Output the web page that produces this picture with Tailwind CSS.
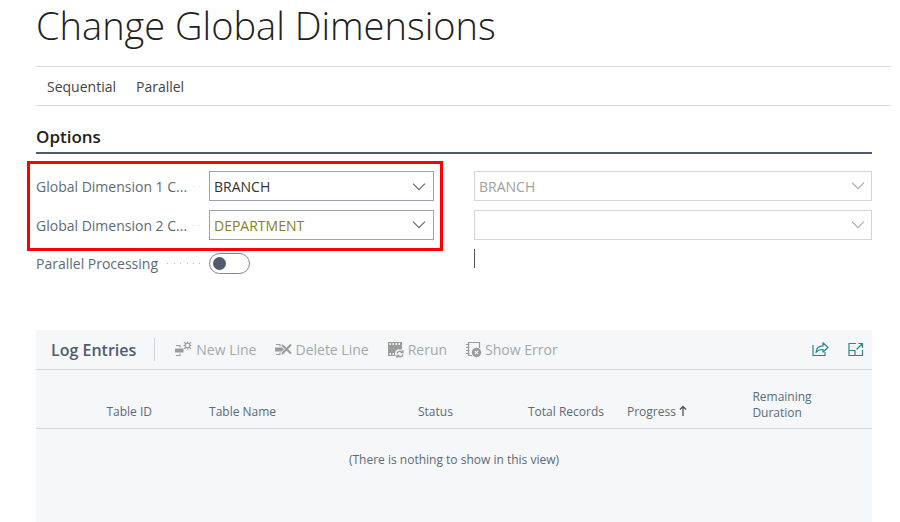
<!DOCTYPE html>
<html lang="en">
<head>
<meta charset="utf-8">
<meta name="viewport" content="width=device-width, initial-scale=1">
<title>Change Global Dimensions</title>
<script src="https://cdn.jsdelivr.net/npm/@tailwindcss/browser@4"></script>
</head>
<body class="bg-white font-['Open_Sans',sans-serif] text-sm text-[#5c6b75]">
<div class="flex min-h-screen flex-col pl-9">
  <h1 class="pb-[15px] text-[38px] leading-[51px] font-light whitespace-nowrap text-[#212121]">Change Global Dimensions</h1>

  <nav class="mr-[9px] flex h-10 items-center gap-5 border-y border-[#dcdcdc] px-[11px] pt-0.5 text-[#444]" aria-label="Actions">
    <button type="button">Sequential</button>
    <button type="button">Parallel</button>
  </nav>

  <main class="mr-7 flex grow flex-col">
    <section aria-labelledby="options">
      <h2 id="options" class="flex h-12 items-end border-b-2 border-[#505c6d] pb-[3px] text-[17px] leading-6 font-semibold text-[#212121]">Options</h2>
      <form class="relative mt-[17px] grid grid-cols-2 gap-x-10 gap-y-[9px]">
        <div class="flex h-[30px] items-center">
          <label for="dim1" class="flex w-[173px] shrink-0 items-center justify-between pt-0.5 pr-2">Global Dimension 1 C...
            <svg class="h-1 w-2" viewBox="0 0 8 4" fill="#d5d9dc"><path d="M0 1h1v1H0zM6 1h1v1H6z"/></svg></label>
          <div class="relative grow">
            <select id="dim1" class="h-[30px] w-full appearance-none border border-[#9ba3b0] bg-white px-1 pt-0.5 text-[#333]"><option>BRANCH</option><option>DEPARTMENT</option></select>
            <svg class="pointer-events-none absolute top-3 right-2 h-2 w-[14px]" viewBox="0 0 14 8" fill="none" stroke="#666" stroke-width="1.1"><path d="M1 .7 7 6.7 13 .7"/></svg>
          </div>
        </div>
        <div class="relative">
          <select disabled aria-label="Current global dimension 1 code" class="h-[30px] w-full appearance-none border border-[#d2d4d8] bg-white px-1 pt-0.5 text-[#a0a0a0] opacity-100"><option>BRANCH</option></select>
          <svg class="pointer-events-none absolute top-[11px] right-[7px] h-2 w-[14px]" viewBox="0 0 14 8" fill="none" stroke="#aaa" stroke-width="1.1"><path d="M1 .7 7 6.7 13 .7"/></svg>
        </div>

        <div class="flex h-[30px] items-center">
          <label for="dim2" class="flex w-[173px] shrink-0 items-center justify-between pt-0.5 pr-2">Global Dimension 2 C...
            <svg class="h-1 w-2" viewBox="0 0 8 4" fill="#d5d9dc"><path d="M0 1h1v1H0zM6 1h1v1H6z"/></svg></label>
          <div class="relative grow">
            <select id="dim2" class="h-[30px] w-full appearance-none border border-[#9ba3b0] bg-white px-1 pt-0.5 text-[#8a8017]"><option>DEPARTMENT</option><option>BRANCH</option></select>
            <svg class="pointer-events-none absolute top-[11px] right-2 h-2 w-[14px]" viewBox="0 0 14 8" fill="none" stroke="#666" stroke-width="1.1"><path d="M1 .7 7 6.7 13 .7"/></svg>
          </div>
        </div>
        <div class="relative">
          <select disabled aria-label="Current global dimension 2 code" class="h-[30px] w-full appearance-none border border-[#d2d4d8] bg-white px-1 pt-0.5 text-[#a0a0a0] opacity-100"><option></option></select>
          <svg class="pointer-events-none absolute top-[11px] right-[7px] h-2 w-[14px]" viewBox="0 0 14 8" fill="none" stroke="#aaa" stroke-width="1.1"><path d="M1 .7 7 6.7 13 .7"/></svg>
        </div>

        <div class="flex h-7 items-center">
          <label for="parallel" class="flex w-[173px] shrink-0 items-center justify-between pt-0.5 pr-2">Parallel Processing
            <svg class="h-1 w-[34px]" viewBox="0 0 34 4" fill="#b5babf"><path d="M0 1h1v1H0zM7 1h1v1H7zM13 1h1v1h-1zM20 1h1v1h-1zM26 1h1v1h-1zM32 1h1v1h-1z"/></svg></label>
          <span class="relative flex">
            <input id="parallel" type="checkbox" role="switch" class="peer h-[21px] w-[41px] appearance-none rounded-full border border-[#7d8694] bg-white">
            <span class="pointer-events-none absolute top-1 left-1 size-[13px] rounded-full bg-[#505c6d] peer-checked:left-6"></span>
          </span>
        </div>
        <input type="text" readonly aria-label="Current value" class="h-[19px] w-full border-l border-[#555] px-1 outline-none">

        <div class="pointer-events-none absolute -top-[10px] -left-[9px] h-[90px] w-[calc(50%-2px)] border-3 border-[#ff0000]"></div>
      </form>
    </section>

    <section class="mt-[53px] grow bg-[#f5f7f9]" aria-labelledby="log">
      <div class="flex h-10 items-center border-b border-[#d5d8db] pr-2 pl-[15px] text-[#a3a9ad]">
        <h2 id="log" class="text-base font-semibold text-[#505c6d]">Log Entries</h2>
        <span class="mr-5 ml-[18px] h-[23px] w-px bg-[#d0d4d8]"></span>
        <div class="flex items-center gap-[19px]">
          <button type="button" class="flex items-center gap-[3px]">
            <svg class="h-[18px] w-[18px]" viewBox="0 0 18 18" fill="none" stroke="#9a9c9b"><path d="M1 4.500h4v2M1 14.500h4v-2" stroke-width="1.200"/><path d="M0 7.500h8.500v4H0z" fill="#9a9c9b" stroke="none"/><circle cx="12.500" cy="4.500" r="2.300" stroke-width="1.100"/><path d="M8.500 4.500h1.500M15 4.500h1.500M12.500.500V2M12.500 7v1.500M9 1l1.800 1.800M14.200 6.200 16 8M16 1l-1.800 1.800M10.800 6.200 9 8" stroke-width="1.100"/></svg>New Line</button>
          <button type="button" class="flex items-center gap-[3px]">
            <svg class="h-[18px] w-[17px]" viewBox="0 0 17 18" fill="none" stroke="#9a9c9b"><path d="M1 3.500h4v2M1 13.500h4v-2" stroke-width="1.200"/><path d="M0 6.500h7l2 2-2 2H0z" fill="#9a9c9b" stroke="none"/><path d="M7 4 16 12.500M16 3.500 7 13" stroke-width="2"/></svg>Delete Line</button>
          <button type="button" class="flex items-center gap-[3px]">
            <svg class="h-[18px] w-[17px]" viewBox="0 0 17 18"><path fill="#9a9c9b" d="M0 1h14v7.500h-2a4 4 0 0 0-4 6.500H0z"/><path fill="#f5f7f9" d="M1.500 2H3v2H1.500zM4.500 2H6v2H4.500zM7.500 2H9v2H7.500zM10.500 2H12v2h-1.500zM1.500 12H3v2H1.500zM4.500 12H6v2H4.500z"/><path d="M9 12.500a3 3 0 0 1 5-1.500M15 9v2.500h-2.500M15 13.500a3 3 0 0 1-5 1.500M9 17v-2.500h2.500" fill="none" stroke="#9a9c9b" stroke-width="1.300"/></svg>Rerun</button>
          <button type="button" class="flex items-center gap-[3px]">
            <svg class="h-[18px] w-[16px]" viewBox="0 0 16 18" fill="none" stroke="#9a9c9b"><path d="M13.500 7V1.500H2.500v13H6" stroke-width="1.200"/><path d="M0 3.500h3.500M0 6.500h3.500M0 9.500h3.500M0 12.500h3.500"/><circle cx="10.500" cy="11.500" r="4.700" fill="#9a9c9b" stroke="none"/><path d="m8.800 9.800 3.400 3.400m0-3.400-3.400 3.400" stroke="#f5f7f9" stroke-width="1.200"/></svg>Show Error</button>
        </div>
        <div class="ml-auto flex items-center gap-[19px]">
          <button type="button" aria-label="Share"><svg class="block h-4 w-[17px]" viewBox="0 0 17 16" fill="none" stroke="#25868b" stroke-width="1.200"><path d="M1 3v10.500h12V10"/><path d="M11 .8 16 5.500l-5 4.500V7.500C7.500 7.300 5.500 8.500 4 10.500c.3-4 3-6.700 7-6.700z" stroke-linejoin="round"/></svg></button>
          <button type="button" aria-label="Expand"><svg class="block h-4 w-4" viewBox="0 0 16 16" fill="none" stroke="#25868b" stroke-width="1.200"><path d="M8 1.500H1v12h13.500V8M1 8.500h6v5M8.500 7.500 14.500 1.500M10.500 1.500h4v4.500"/></svg></button>
        </div>
      </div>
      <table class="w-full table-fixed text-xs leading-4">
        <thead>
          <tr class="h-[58px] border-b border-[#d5d8db] text-left align-bottom">
            <th scope="col" class="w-[19.5%] pr-[47px] pb-2 text-right font-normal">Table ID</th>
            <th scope="col" class="w-[25%] px-2.5 pb-2 font-normal">Table Name</th>
            <th scope="col" class="w-[12%] px-2.5 pb-2 font-normal">Status</th>
            <th scope="col" class="w-[13%] pr-[13px] pb-2 text-right font-normal whitespace-nowrap">Total Records</th>
            <th scope="col" class="w-[15%] px-2.5 pb-2 font-normal" aria-sort="ascending">Progress <svg class="inline h-3 w-2 align-[-1px]" viewBox="0 0 8 12" fill="none" stroke="#555" stroke-width="1.300"><path d="M4 11V1.500M1 4.500l3-3 3 3"/></svg></th>
            <th scope="col" class="w-[15.5%] px-2.5 pb-[7px] font-normal">Remaining<br>Duration</th>
          </tr>
        </thead>
        <tbody>
          <tr><td colspan="6" class="pt-[23px] text-center">(There is nothing to show in this view)</td></tr>
        </tbody>
      </table>
    </section>
  </main>
</div>
</body>
</html>
